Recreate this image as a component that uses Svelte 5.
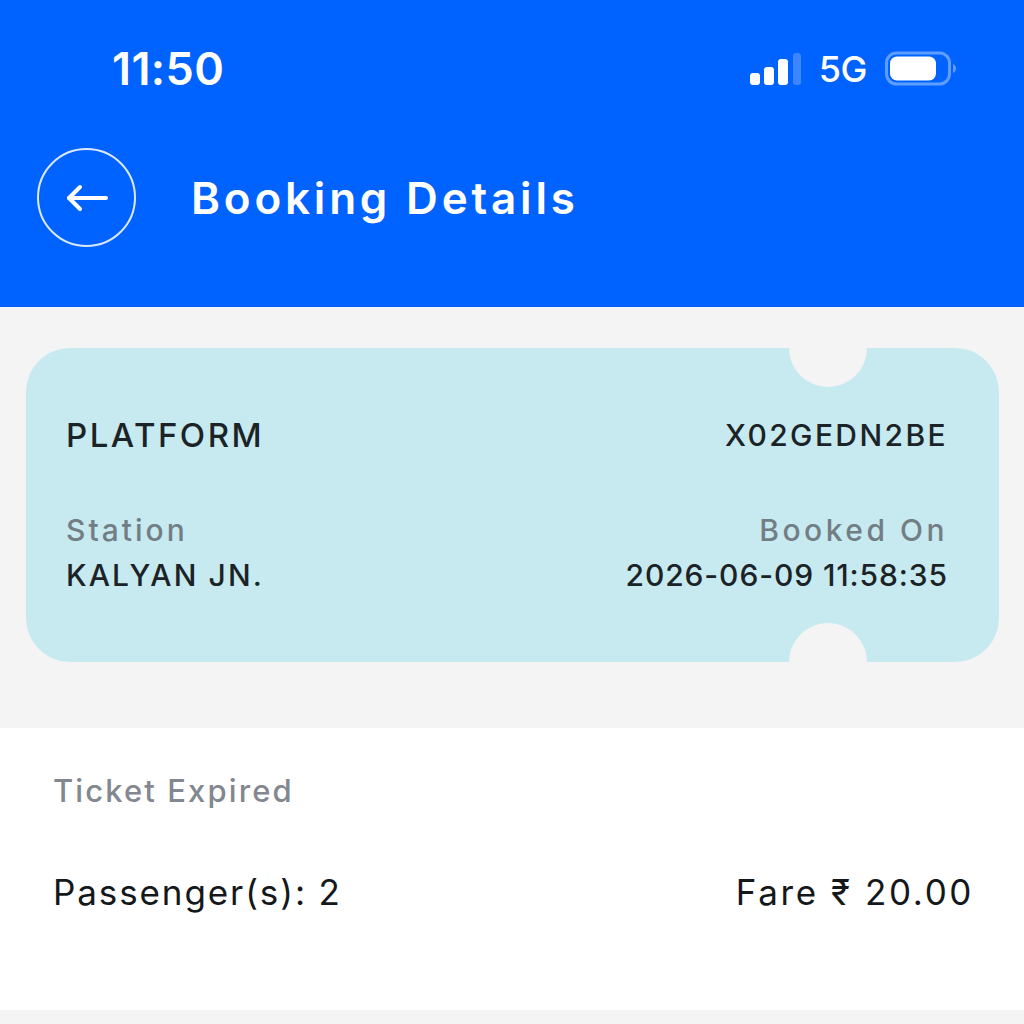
<script>
let ticket = {
	type: 'PLATFORM',
	code: 'X02GEDN2BE',
	station: 'KALYAN JN.',
	bookedOn: '2026-06-09 11:58:35'
};
</script>

<div class="page">
	<header class="header">
		<div class="status">
			<span class="time">11:50</span>
			<div class="indicators">
				<svg class="signal" width="51" height="34" viewBox="0 0 51 34">
					<rect x="0" y="21" width="10" height="12" rx="3" fill="#fff" />
					<rect x="14" y="15" width="10" height="18" rx="3" fill="#fff" />
					<rect x="28" y="7" width="10" height="26" rx="3" fill="#fff" />
					<rect x="43" y="1" width="8" height="32" rx="3" fill="#3d86ff" />
				</svg>
				<span class="net">5G</span>
				<svg class="battery" width="72" height="36" viewBox="0 0 72 36">
					<rect x="1.500" y="2" width="63" height="31" rx="10" fill="none" stroke="#5f9dff" stroke-width="3" />
					<rect x="5" y="5.500" width="46" height="24" rx="7" fill="#fff" />
					<path d="M68 13c2 1 3 2.500 3 4.500s-1 3.500-3 4.500z" fill="#5f9dff" />
				</svg>
			</div>
		</div>
		<div class="title-row">
			<button class="back" aria-label="Back">
				<svg width="42" height="32" viewBox="0 0 42 32" fill="none" stroke="#fff" stroke-width="4" stroke-linecap="round" stroke-linejoin="round">
					<path d="M40 16H3" />
					<path d="M14 5L3 16l11 11" />
				</svg>
			</button>
			<h1>Booking Details</h1>
		</div>
	</header>

	<section class="ticket-wrap">
		<div class="ticket">
			<div class="row main">
				<span class="type">{ticket.type}</span>
				<span class="code">{ticket.code}</span>
			</div>
			<div class="row labels">
				<span class="station-label">Station</span>
				<span class="booked-label">Booked On</span>
			</div>
			<div class="row values">
				<span class="station">{ticket.station}</span>
				<span class="date">{ticket.bookedOn}</span>
			</div>
		</div>
	</section>

	<section class="info">
		<div class="expired">Ticket Expired</div>
		<div class="row summary">
			<span class="passengers">Passenger(s): 2</span>
			<span class="fare">Fare ₹ 20.00</span>
		</div>
	</section>
</div>

<style>
:global(body) {
	background: #f4f4f4;
}

.page {
	font-family: Inter, "Noto Sans", sans-serif;
	height: 1024px;
	overflow: hidden;
	background: #f4f4f4;
}

.header {
	height: 307px;
	background: #0062ff;
	color: #fff;
	box-sizing: border-box;
	padding: 39px 67px 0 37px;
}

.status {
	display: flex;
	justify-content: space-between;
	align-items: center;
	height: 58px;
	padding-left: 75px;
}

.time {
	font-size: 45px;
	font-weight: 600;
	letter-spacing: 0.4px;
}

.indicators {
	display: flex;
	align-items: center;
	margin-top: 2px;
}

.signal {
	margin-right: 18px;
}

.net {
	font-size: 36px;
	font-weight: 500;
	margin-right: 18px;
	letter-spacing: -0.5px;
}

.title-row {
	display: flex;
	align-items: center;
	gap: 55px;
	margin-top: 51px;
}

.back {
	width: 99px;
	height: 99px;
	border: 2px solid #dbe9ff;
	border-radius: 50%;
	background: none;
	padding: 0;
	display: flex;
	align-items: center;
	justify-content: center;
}

h1 {
	margin: 0;
	font-size: 44px;
	font-weight: 600;
	letter-spacing: 3.8px;
}

.ticket-wrap {
	height: 421px;
	box-sizing: border-box;
	padding: 41px 25px 0 26px;
}

.ticket {
	position: relative;
	overflow: hidden;
	height: 314px;
	box-sizing: border-box;
	padding: 67px 51px 0 40px;
	background: #c7eaf1;
	border-radius: 44px;
}

.ticket::before,
.ticket::after {
	content: '';
	position: absolute;
	left: 763px;
	width: 78px;
	height: 78px;
	border-radius: 50%;
	background: #f4f4f4;
}

.ticket::before {
	top: -39px;
}

.ticket::after {
	bottom: -39px;
}

.row {
	display: flex;
	justify-content: space-between;
	align-items: center;
}

.main {
	font-weight: 500;
	color: #1c2326;
}

.type {
	font-size: 33px;
	letter-spacing: 2.5px;
}

.code {
	font-size: 30px;
	letter-spacing: 2.4px;
}

.labels {
	margin-top: 57px;
	font-size: 30px;
	font-weight: 500;
	color: #737e84;
}

.station-label {
	letter-spacing: 3px;
}

.booked-label {
	letter-spacing: 3.500px;
}

.values {
	margin-top: 9px;
	font-size: 30px;
	font-weight: 500;
	color: #1c2326;
}

.station {
	letter-spacing: 2.1px;
}

.date {
	letter-spacing: 0.9px;
}

.info {
	height: 282px;
	box-sizing: border-box;
	background: #fff;
	padding: 44px 50px 0 53px;
}

.expired {
	font-size: 31px;
	font-weight: 500;
	color: #83878f;
	letter-spacing: 2.100px;
}

.summary {
	margin-top: 62px;
	font-size: 35px;
	font-weight: 400;
	color: #14181a;
}

.passengers {
	letter-spacing: 1.9px;
}

.fare {
	letter-spacing: 2.600px;
}
</style>
